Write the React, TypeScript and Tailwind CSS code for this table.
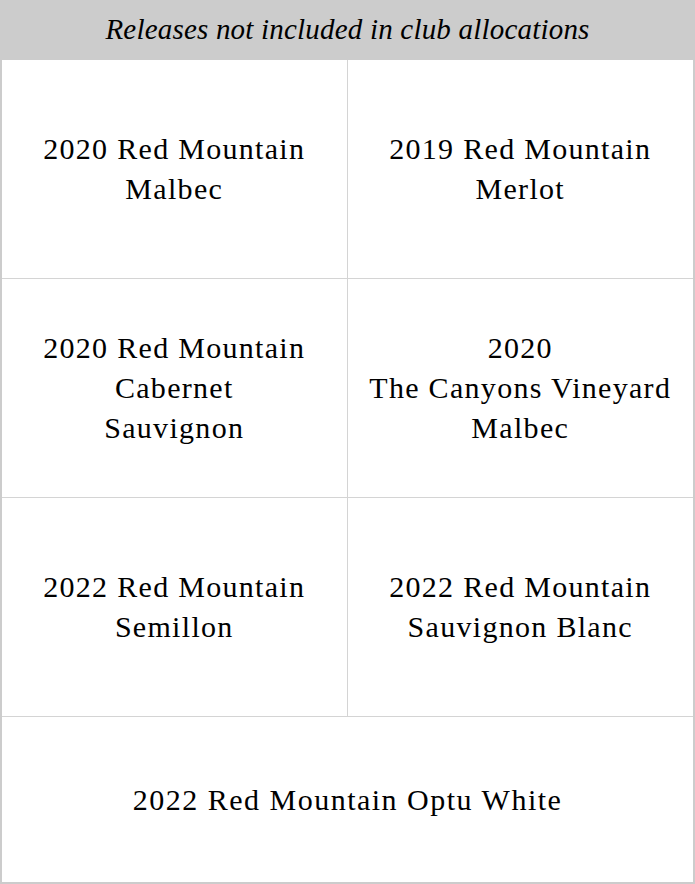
const wines: string[][] = [
  ['2020 Red Mountain', 'Malbec'],
  ['2019 Red Mountain', 'Merlot'],
  ['2020 Red Mountain', 'Cabernet', 'Sauvignon'],
  ['2020', 'The Canyons Vineyard', 'Malbec'],
  ['2022 Red Mountain', 'Semillon'],
  ['2022 Red Mountain', 'Sauvignon Blanc'],
];

export default function App() {
  return (
    <div
      className="w-[695px] bg-white text-black"
      style={{ fontFamily: '"Liberation Serif", serif' }}
    >
      <div className="h-[60px] bg-[#cccccc] flex items-center justify-center">
        <h2 className="italic text-[29px] tracking-[0.2px]">
          Releases not included in club allocations
        </h2>
      </div>
      <div className="border-x-2 border-b-2 border-[#cccccc]">
        <div className="grid grid-cols-2">
          {wines.map((lines, i) => (
            <div
              key={i}
              className={`h-[219px] flex flex-col items-center justify-center text-center text-[30px] tracking-[1.3px] leading-[40px] border-b-[1px] border-[#d4d4d4] ${
                i % 2 === 0 ? 'border-r-[1px]' : ''
              }`}
            >
              {lines.map((line, j) => (
                <span key={j}>{line}</span>
              ))}
            </div>
          ))}
        </div>
        <div className="h-[165px] flex items-center justify-center text-[30px] tracking-[1.5px]">
          2022 Red Mountain Optu White
        </div>
      </div>
    </div>
  );
}
